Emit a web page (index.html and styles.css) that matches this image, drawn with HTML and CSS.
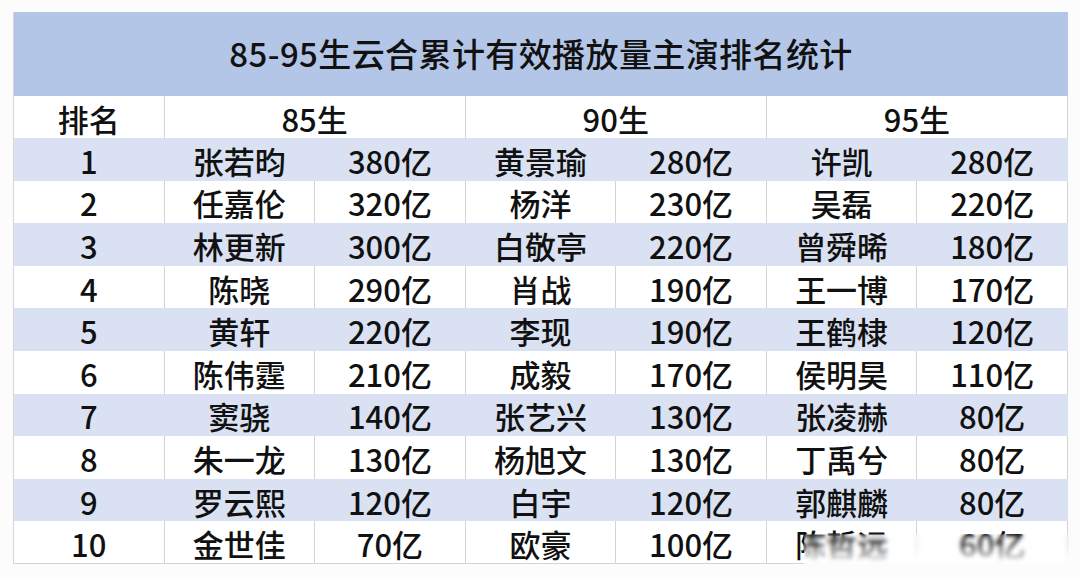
FILE: index.html
```html
<!DOCTYPE html>
<html lang="zh-CN">
<head>
<meta charset="utf-8">
<title>85-95生云合累计有效播放量主演排名统计</title>
<link rel="stylesheet" href="styles.css">
</head>
<body>
<div class="sheet">
  <div class="title">85-95生云合累计有效播放量主演排名统计</div>

  <div class="cell head">排名</div>
  <div class="cell head span2">85生</div>
  <div class="cell head span2">90生</div>
  <div class="cell head span2 last">95生</div>

  <div class="cell b">1</div><div class="cell b">张若昀</div><div class="cell b">380亿</div><div class="cell b">黄景瑜</div><div class="cell b">280亿</div><div class="cell b">许凯</div><div class="cell b last">280亿</div>
  <div class="cell">2</div><div class="cell">任嘉伦</div><div class="cell">320亿</div><div class="cell">杨洋</div><div class="cell">230亿</div><div class="cell">吴磊</div><div class="cell last">220亿</div>
  <div class="cell b">3</div><div class="cell b">林更新</div><div class="cell b">300亿</div><div class="cell b">白敬亭</div><div class="cell b">220亿</div><div class="cell b">曾舜晞</div><div class="cell b last">180亿</div>
  <div class="cell">4</div><div class="cell">陈晓</div><div class="cell">290亿</div><div class="cell">肖战</div><div class="cell">190亿</div><div class="cell">王一博</div><div class="cell last">170亿</div>
  <div class="cell b">5</div><div class="cell b">黄轩</div><div class="cell b">220亿</div><div class="cell b">李现</div><div class="cell b">190亿</div><div class="cell b">王鹤棣</div><div class="cell b last">120亿</div>
  <div class="cell">6</div><div class="cell">陈伟霆</div><div class="cell">210亿</div><div class="cell">成毅</div><div class="cell">170亿</div><div class="cell">侯明昊</div><div class="cell last">110亿</div>
  <div class="cell b">7</div><div class="cell b">窦骁</div><div class="cell b">140亿</div><div class="cell b">张艺兴</div><div class="cell b">130亿</div><div class="cell b">张凌赫</div><div class="cell b last">80亿</div>
  <div class="cell">8</div><div class="cell">朱一龙</div><div class="cell">130亿</div><div class="cell">杨旭文</div><div class="cell">130亿</div><div class="cell">丁禹兮</div><div class="cell last">80亿</div>
  <div class="cell b">9</div><div class="cell b">罗云熙</div><div class="cell b">120亿</div><div class="cell b">白宇</div><div class="cell b">120亿</div><div class="cell b">郭麒麟</div><div class="cell b last">80亿</div>
  <div class="cell bottom">10</div><div class="cell bottom">金世佳</div><div class="cell bottom">70亿</div><div class="cell bottom">欧豪</div><div class="cell bottom">100亿</div><div class="cell bottom">陈哲远</div><div class="cell bottom last">60亿</div>

  <div class="veil"></div>
</div>
</body>
</html>
```

FILE: styles.css
```css
html, body {
  margin: 0;
  padding: 0;
  background: #fcfcfc;
}

body {
  font-family: "Noto Sans CJK SC", "Noto Sans", sans-serif;
  color: #111;
}

.sheet {
  position: relative;
  margin: 12px 0 0 13px;
  width: 1055px;
  display: grid;
  grid-template-columns: repeat(7, 1fr);
  grid-template-rows: 84px 42px repeat(10, 42.6px);
  background: #fff;
  border-left: 1px solid #d6d6d6;
  box-sizing: border-box;
}

.title {
  grid-column: 1 / -1;
  background: #b4c6e7;
  display: flex;
  align-items: center;
  justify-content: center;
  font-size: 33px;
  font-weight: 500;
  letter-spacing: 0.4px;
  padding-bottom: 2px;
}

.cell {
  display: flex;
  align-items: center;
  justify-content: center;
  font-size: 31px;
  font-weight: 500;
  line-height: 1;
  border-right: 1px solid #d4d4d4;
  padding-top: 2px;
  box-sizing: border-box;
}

.span2 {
  grid-column: span 2;
}

.b {
  background: #d9e1f2;
  border-right-color: #d9e1f2;
}

.last {
  border-right-color: #d4d4d4;
}

.b.last {
  border-right-color: #d9e1f2;
}

.bottom {
  border-bottom: 1px solid #d4d4d4;
}

.veil {
  position: absolute;
  left: 790px;
  top: 522px;
  width: 265px;
  height: 34px;
  backdrop-filter: blur(2px);
  background: linear-gradient(to bottom, rgba(255,255,255,0) 0%, rgba(255,255,255,0.1) 30%, rgba(255,255,255,0.8) 75%, #fff 100%);
}
```
